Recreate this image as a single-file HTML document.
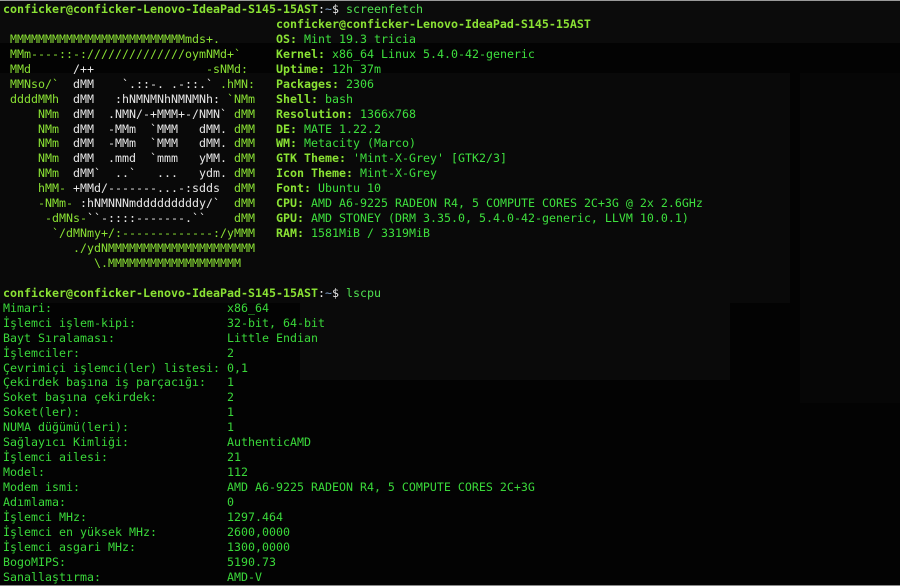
<!DOCTYPE html>
<html><head><meta charset="utf-8">
<style>
html,body{margin:0;padding:0;background:#030303;width:900px;height:586px;overflow:hidden;position:relative}
.bg{position:absolute}
pre{position:absolute;left:3px;top:2px;margin:0;font-family:"DejaVu Sans Mono","Liberation Mono",monospace;font-size:11.63px;line-height:14.94px;color:#3ad83a;white-space:pre}
.p{color:#8ae234;font-weight:bold}
.w{color:#e8e8e8}
.t{color:#7f9fc8}
.g{color:#8ae234}
.l{color:#8ae234;font-weight:bold}
.v{color:#3ee03e}
.c{color:#50e050}
</style></head><body>
<div class="bg" style="left:0;top:0;width:900px;height:1px;background:#9a9a9a"></div>
<div class="bg" style="left:0;top:1px;width:900px;height:42px;background:#0b0b0b"></div>
<div class="bg" style="left:0;top:73px;width:790px;height:230px;background:#090909"></div>
<div class="bg" style="left:300px;top:280px;width:430px;height:100px;background:#0a0a0a"></div>
<div class="bg" style="left:800px;top:73px;width:100px;height:330px;background:#060606"></div>
<div class="bg" style="left:0;top:585px;width:900px;height:1px;background:#8a8a8a"></div>
<pre><span class="p">conficker@conficker-Lenovo-IdeaPad-S145-15AST</span><span class="w">:</span><span class="t">~</span><span class="w">$ </span><span class="c">screenfetch</span>
<span class="g">                                       </span><span class="l">conficker@conficker-Lenovo-IdeaPad-S145-15AST</span>
<span class="g"> MMMMMMMMMMMMMMMMMMMMMMMMMmds+.        </span><span class="l">OS:</span><span class="v"> Mint 19.3 tricia</span>
<span class="g"> MMm----::-://////////////oymNMd+`     </span><span class="l">Kernel:</span><span class="v"> x86_64 Linux 5.4.0-42-generic</span>
<span class="g"> MMd      </span><span class="w">/++</span><span class="g">                -sNMd:    </span><span class="l">Uptime:</span><span class="v"> 12h 37m</span>
<span class="g"> MMNso/`  </span><span class="w">dMM    `.::-. .-::.`</span><span class="g"> .hMN:   </span><span class="l">Packages:</span><span class="v"> 2306</span>
<span class="g"> ddddMMh  </span><span class="w">dMM   :hNMNMNhNMNMNh:</span><span class="g"> `NMm   </span><span class="l">Shell:</span><span class="v"> bash</span>
<span class="g">     NMm  </span><span class="w">dMM  .NMN/-+MMM+-/NMN`</span><span class="g"> dMM   </span><span class="l">Resolution:</span><span class="v"> 1366x768</span>
<span class="g">     NMm  </span><span class="w">dMM  -MMm  `MMM   dMM.</span><span class="g"> dMM   </span><span class="l">DE:</span><span class="v"> MATE 1.22.2</span>
<span class="g">     NMm  </span><span class="w">dMM  -MMm  `MMM   dMM.</span><span class="g"> dMM   </span><span class="l">WM:</span><span class="v"> Metacity (Marco)</span>
<span class="g">     NMm  </span><span class="w">dMM  .mmd  `mmm   yMM.</span><span class="g"> dMM   </span><span class="l">GTK Theme:</span><span class="v"> 'Mint-X-Grey' [GTK2/3]</span>
<span class="g">     NMm  </span><span class="w">dMM`  ..`   ...   ydm.</span><span class="g"> dMM   </span><span class="l">Icon Theme:</span><span class="v"> Mint-X-Grey</span>
<span class="g">     hMM- </span><span class="w">+MMd/-------...-:sdds</span><span class="g">  dMM   </span><span class="l">Font:</span><span class="v"> Ubuntu 10</span>
<span class="g">     -NMm- </span><span class="w">:hNMNNNmdddddddddy/`</span><span class="g">  dMM   </span><span class="l">CPU:</span><span class="v"> AMD A6-9225 RADEON R4, 5 COMPUTE CORES 2C+3G @ 2x 2.6GHz</span>
<span class="g">      -dMNs-</span><span class="w">``-::::-------.``</span><span class="g">    dMM   </span><span class="l">GPU:</span><span class="v"> AMD STONEY (DRM 3.35.0, 5.4.0-42-generic, LLVM 10.0.1)</span>
<span class="g">       `/dMNmy+/:-------------:/yMMM   </span><span class="l">RAM:</span><span class="v"> 1581MiB / 3319MiB</span>
<span class="g">          ./ydNMMMMMMMMMMMMMMMMMMMMM</span>
<span class="g">             \.MMMMMMMMMMMMMMMMMMM</span>

<span class="p">conficker@conficker-Lenovo-IdeaPad-S145-15AST</span><span class="w">:</span><span class="t">~</span><span class="w">$ </span><span class="c">lscpu</span>
Mimari:                         x86_64
İşlemci işlem-kipi:             32-bit, 64-bit
Bayt Sıralaması:                Little Endian
İşlemciler:                     2
Çevrimiçi işlemci(ler) listesi: 0,1
Çekirdek başına iş parçacığı:   1
Soket başına çekirdek:          2
Soket(ler):                     1
NUMA düğümü(leri):              1
Sağlayıcı Kimliği:              AuthenticAMD
İşlemci ailesi:                 21
Model:                          112
Modem ismi:                     AMD A6-9225 RADEON R4, 5 COMPUTE CORES 2C+3G
Adımlama:                       0
İşlemci MHz:                    1297.464
İşlemci en yüksek MHz:          2600,0000
İşlemci asgari MHz:             1300,0000
BogoMIPS:                       5190.73
Sanallaştırma:                  AMD-V</pre>
</body></html>
